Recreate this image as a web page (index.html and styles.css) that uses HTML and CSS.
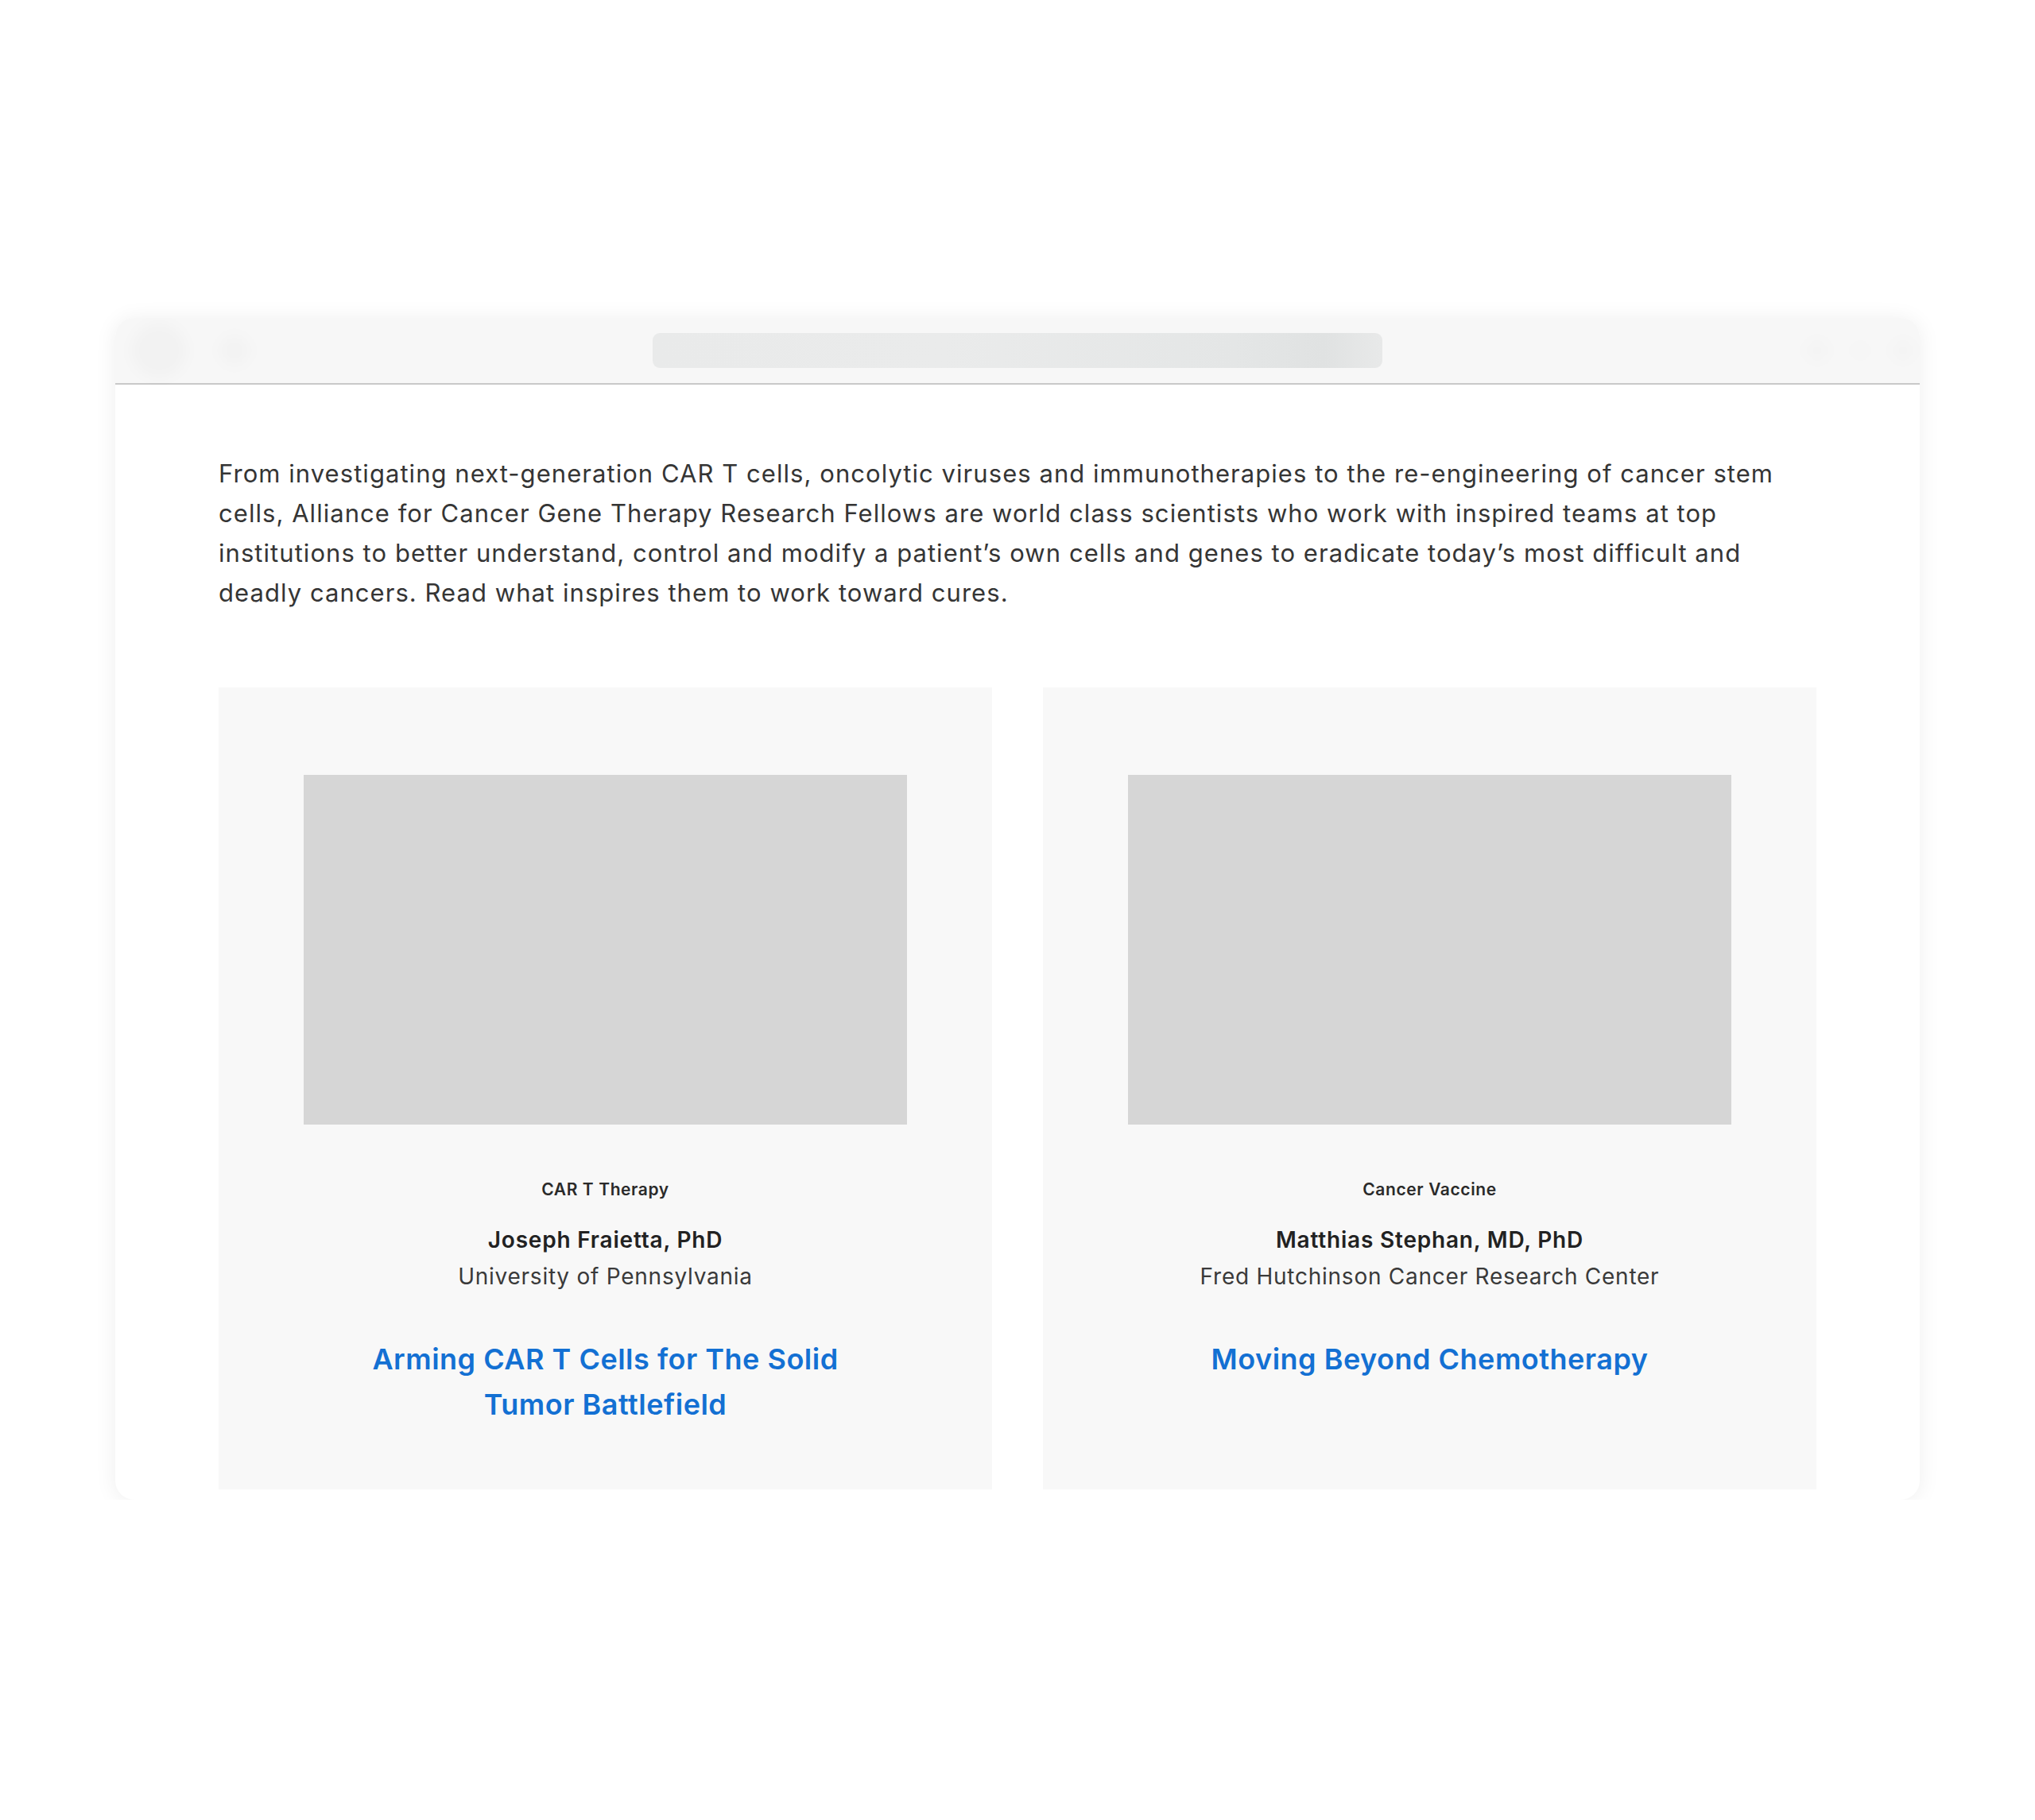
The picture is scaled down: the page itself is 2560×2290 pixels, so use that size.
FILE: index.html
```html
<!DOCTYPE html>
<html>
  <head>
    <title>Research Fellows</title>
    <meta charset="UTF-8">
    <link rel="stylesheet" href="styles.css">
  </head>
  <body>
    <div class="stage">
      <div class="window">
        <div class="titlebar">
          <div class="lights">
            <span class="blur-dot blur-dot-lg"></span>
            <span class="blur-dot"></span>
          </div>
          <div class="address"></div>
          <div class="tools">
            <span class="blur-dot blur-dot-sm"></span>
            <span class="blur-dot blur-dot-xs"></span>
            <span class="blur-dot blur-dot-sm"></span>
          </div>
        </div>

        <div class="content">
          <p class="intro">From investigating next-generation CAR T cells, oncolytic viruses and immunotherapies to the re-engineering of cancer stem cells, Alliance for Cancer Gene Therapy Research Fellows are world class scientists who work with inspired teams at top institutions to better understand, control and modify a patient&rsquo;s own cells and genes to eradicate today&rsquo;s most difficult and deadly cancers. Read what inspires them to work toward cures.</p>

          <div class="cards">
            <div class="card">
              <div class="card-photo"></div>
              <div class="card-tag">CAR T Therapy</div>
              <div class="card-name">Joseph Fraietta, PhD</div>
              <div class="card-place">University of Pennsylvania</div>
              <a href="#" class="card-title">Arming CAR T Cells for The Solid Tumor Battlefield</a>
            </div>

            <div class="card">
              <div class="card-photo"></div>
              <div class="card-tag">Cancer Vaccine</div>
              <div class="card-name">Matthias Stephan, MD, PhD</div>
              <div class="card-place">Fred Hutchinson Cancer Research Center</div>
              <a href="#" class="card-title">Moving Beyond Chemotherapy</a>
            </div>
          </div>
        </div>
      </div>
    </div>
  </body>
</html>
```

FILE: styles.css
```css
html, body {
  margin: 0px;
  padding: 0px;
  background-color: #fff;
}

body {
  font-family: Inter, "Open Sans", sans-serif;
  color: #333;
}

.stage {
  padding: 400px 145px 0 145px;
}

/* browser frame */
.window {
  background-color: #fff;
  border-radius: 24px;
  overflow: hidden;
  box-shadow: 0 2px 28px rgba(0, 0, 0, 0.07);
}

.titlebar {
  height: 82px;
  background-color: #f7f7f7;
  border-bottom: 2px solid #c9c9c9;
  display: grid;
  grid-template-columns: 1fr 918px 1fr;
  align-items: center;
}

.lights {
  display: flex;
  align-items: center;
  gap: 40px;
  padding-left: 20px;
}

.tools {
  display: flex;
  align-items: center;
  justify-content: flex-end;
  gap: 30px;
  padding-right: 6px;
}

.blur-dot {
  display: inline-block;
  width: 40px;
  height: 40px;
  border-radius: 50%;
  background-color: rgba(0, 0, 0, 0.015);
  filter: blur(8px);
}

.blur-dot-lg {
  width: 70px;
  height: 70px;
  background-color: rgba(0, 0, 0, 0.02);
}

.blur-dot-sm {
  width: 30px;
  height: 30px;
  background-color: rgba(0, 0, 0, 0.012);
}

.blur-dot-xs {
  width: 18px;
  height: 18px;
  background-color: rgba(0, 0, 0, 0.01);
}

.address {
  height: 44px;
  border-radius: 9px;
  background: linear-gradient(to right, #e9eaea 0%, #eaebeb 40%, #e4e6e6 80%, #e0e2e2 92%, #e8e9e9 100%);
}

/* page content */
.content {
  padding: 87px 130px 13px 130px;
}

.intro {
  margin: 0;
  font-size: 31px;
  line-height: 50px;
  letter-spacing: 1.05px;
  color: #353535;
}

.cards {
  margin-top: 94px;
  display: grid;
  grid-template-columns: 1fr 1fr;
  gap: 64px;
}

.card {
  background-color: #f8f8f8;
  padding: 110px 107px 78px 107px;
  display: flex;
  flex-direction: column;
  align-items: center;
  text-align: center;
}

.card-photo {
  align-self: stretch;
  height: 440px;
  background-color: #d6d6d6;
}

.card-tag {
  margin-top: 67px;
  font-size: 21px;
  line-height: 30px;
  letter-spacing: 0.6px;
  font-weight: 600;
  color: #2a2a2a;
}

.card-name {
  margin-top: 25px;
  font-size: 28px;
  line-height: 46px;
  letter-spacing: 0.8px;
  font-weight: 600;
  color: #222;
}

.card-place {
  font-size: 28px;
  line-height: 46px;
  letter-spacing: 0.75px;
  color: #3a3a3a;
}

.card-title {
  margin-top: 53px;
  max-width: 640px;
  font-size: 36px;
  line-height: 57px;
  letter-spacing: 0.5px;
  font-weight: 600;
  color: #1370d3;
  text-decoration: none;
}
```
